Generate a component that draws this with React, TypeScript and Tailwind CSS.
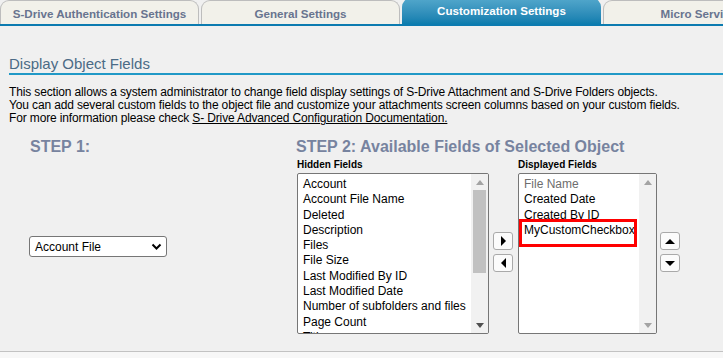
import React from "react";

const hidden = [
  "Account",
  "Account File Name",
  "Deleted",
  "Description",
  "Files",
  "File Size",
  "Last Modified By ID",
  "Last Modified Date",
  "Number of subfolders and files",
  "Page Count",
  "Title",
];

function Tri({ dir, color = "#000" }: { dir: "up" | "down" | "left" | "right"; color?: string }) {
  const pts =
    dir === "up"
      ? "0,6 5,1 10,6"
      : dir === "down"
      ? "0,1 10,1 5,6"
      : dir === "left"
      ? "6,0 6,10 1,5"
      : "1,0 1,10 6,5";
  const w = dir === "up" || dir === "down" ? 10 : 7;
  const h = dir === "up" || dir === "down" ? 7 : 10;
  return (
    <svg width={w} height={h} viewBox={`0 0 ${w} ${h}`}>
      <polygon points={pts} fill={color} />
    </svg>
  );
}

function SmallTri({ dir, color }: { dir: "up" | "down"; color: string }) {
  return (
    <svg width="8" height="5" viewBox="0 0 8 5">
      <polygon points={dir === "up" ? "0,5 4,0 8,5" : "0,0 8,0 4,5"} fill={color} />
    </svg>
  );
}

function Btn({ dir }: { dir: "up" | "down" | "left" | "right" }) {
  return (
    <div className="w-[20px] h-[18px] border border-[#a9a9a9] rounded-[3px] bg-[#fbfbfb] flex items-center justify-center">
      <Tri dir={dir} />
    </div>
  );
}

export default function App() {
  return (
    <div
      className="w-[723px] h-[358px] bg-[#f0f0f0] overflow-hidden relative"
      style={{ fontFamily: '"Liberation Sans", Arial, sans-serif' }}
    >
      {/* Tabs */}
      <div className="flex items-end h-[26px] border-b-2 border-[#0c7bb0] gap-[2px]">
        {["S-Drive Authentication Settings", "General Settings"].map((t) => (
          <div
            key={t}
            className="w-[199px] h-[24px] shrink-0 rounded-t-[9px] border border-b-0 border-[#bdbdbd] bg-[#f2f1ea] flex items-center justify-center pt-[3px] text-[11.6px] font-bold text-[#68748f]"
          >
            {t}
          </div>
        ))}
        <div className="w-[199px] h-[26px] shrink-0 rounded-t-[9px] bg-gradient-to-b from-[#53a8cc] to-[#0b7dae] flex items-center justify-center pb-[1px] text-[11.6px] font-bold text-white">
          Customization Settings
        </div>
        <div className="w-[246px] h-[24px] shrink-0 rounded-t-[9px] border border-b-0 border-[#bdbdbd] bg-[#f2f1ea] flex items-center justify-center pt-[3px] text-[11.6px] font-bold text-[#68748f]">
          Micro Services Settings
        </div>
      </div>

      {/* Section heading */}
      <div className="ml-[9px] mt-[28px] text-[15px] leading-[19px] text-[#4b6b86] border-b-2 border-[#2199c7]">
        Display Object Fields
      </div>

      <div className="ml-[9px] mt-[11px] text-[12px] tracking-[-0.14px] leading-[13px] text-black">
        <div>
          This section allows a system administrator to change field display settings of S-Drive Attachment and S-Drive Folders objects.
        </div>
        <div>
          You can add several custom fields to the object file and customize your attachments screen columns based on your custom fields.
        </div>
        <div>
          For more information please check <span className="underline">S- Drive Advanced Configuration Documentation.</span>
        </div>
      </div>

      {/* Steps */}
      <div className="flex mt-[13px]">
        <div className="w-[296px] shrink-0 pl-[30px]">
          <div className="text-[16px] leading-[18px] font-bold text-[#77839f]">STEP 1:</div>
          <div className="mt-[80px] ml-[-1px] w-[138px] h-[21px] border border-[#767676] rounded-[3px] bg-white flex items-center justify-between pl-[5px] pr-[4px] text-[12px] text-black">
            <span>Account File</span>
            <svg width="11" height="8" viewBox="0 0 11 8">
              <polyline points="1.5,1.5 5.5,5.5 9.5,1.5" fill="none" stroke="#000" strokeWidth="2" />
            </svg>
          </div>
        </div>
        <div>
          <div className="text-[16px] leading-[18px] font-bold text-[#77839f]">
            STEP 2: Available Fields of Selected Object
          </div>
          <div className="flex mt-[2px] pl-[1px]">
            {/* Hidden */}
            <div>
              <div className="text-[10px] leading-[13px] font-bold text-black">Hidden Fields</div>
              <div className="mt-[2px] w-[192px] h-[161px] border border-[#767676] rounded-[2px] bg-white flex overflow-hidden">
                <div className="flex-1 pl-[5px] pt-[3px] text-[12px] leading-[15.3px] text-black overflow-hidden">
                  {hidden.map((h) => (
                    <div key={h} className="whitespace-nowrap">{h}</div>
                  ))}
                </div>
                <div className="w-[17px] bg-[#f1f1f1] flex flex-col items-center">
                  <div className="h-[16px] flex items-center justify-center">
                    <SmallTri dir="up" color="#a3a3a3" />
                  </div>
                  <div className="w-[13px] h-[83px] bg-[#c1c1c1]" />
                  <div className="flex-1" />
                  <div className="h-[16px] flex items-center justify-center">
                    <SmallTri dir="down" color="#505050" />
                  </div>
                </div>
              </div>
            </div>
            {/* Move buttons */}
            <div className="flex flex-col gap-[4px] mt-[74px] ml-[4px] mr-[5px]">
              <Btn dir="right" />
              <Btn dir="left" />
            </div>
            {/* Displayed */}
            <div>
              <div className="text-[10px] leading-[13px] font-bold text-black">Displayed Fields</div>
              <div className="mt-[2px] w-[139px] h-[161px] border border-[#767676] rounded-[2px] bg-white flex overflow-hidden">
                <div className="flex-1 pl-[5px] pt-[3px] text-[12px] leading-[15.3px] text-black overflow-hidden">
                  <div className="text-[#6d6d6d]">File Name</div>
                  <div>Created Date</div>
                  <div>Created By ID</div>
                  <div className="relative whitespace-nowrap">
                    MyCustomCheckbox
                    <div className="absolute left-[-5px] top-[-4px] w-[118px] h-[28px] border-[3px] border-[#ff0000]" />
                  </div>
                </div>
                <div className="w-[17px] bg-[#f1f1f1] flex flex-col items-center">
                  <div className="h-[16px] flex items-center justify-center">
                    <SmallTri dir="up" color="#a3a3a3" />
                  </div>
                  <div className="flex-1" />
                  <div className="h-[16px] flex items-center justify-center">
                    <SmallTri dir="down" color="#a3a3a3" />
                  </div>
                </div>
              </div>
            </div>
            <div className="flex flex-col gap-[4px] mt-[74px] ml-[3px]">
              <Btn dir="up" />
              <Btn dir="down" />
            </div>
          </div>
        </div>
      </div>

      {/* bottom line */}
      <div className="absolute left-0 right-0 top-[351px] h-[7px] border-t border-[#c2c2c2] bg-[#f7f7f7]" />
    </div>
  );
}
